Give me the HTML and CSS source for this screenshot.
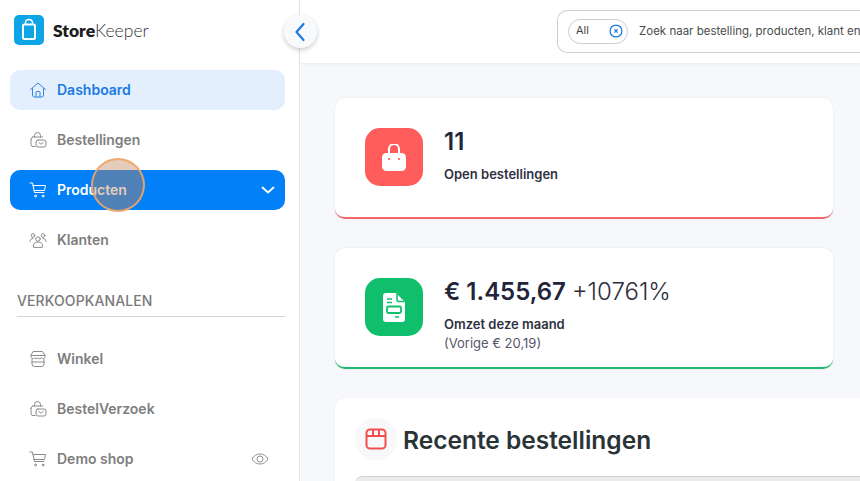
FILE: index.html
```html
<!DOCTYPE html>
<html lang="nl">
<head>
<meta charset="utf-8">
<title>StoreKeeper</title>
<link rel="stylesheet" href="styles.css">
</head>
<body>
<div class="app">
  <aside class="sidebar">
    <div class="brand">
      <svg class="brand-logo" width="30" height="30" viewBox="0 0 30 30"><rect width="30" height="30" rx="5" fill="#0ea5e4"/><rect x="9" y="9.500" width="12" height="14.500" rx="1.500" fill="none" stroke="#fff" stroke-width="2"/><path d="M11.500 9.500V7.500a3.500 3 0 0 1 7 0v2" fill="none" stroke="#fff" stroke-width="1.500"/><rect x="14" y="22" width="2" height="1.200" fill="#0ea5e4"/></svg>
      <span class="brand-name"><b>Store</b>Keeper</span>
    </div>
    <nav class="nav">
      <a class="nav-item is-current">
        <svg class="nav-icon" viewBox="0 0 18 18"><path d="M1.500 8.500 9 2l7.500 6.500M3.500 7.500V14a2 2 0 0 0 2 2h7a2 2 0 0 0 2-2V7.500M7 16v-4.500a1 1 0 0 1 1-1h2a1 1 0 0 1 1 1V16"/></svg>
        <span>Dashboard</span>
      </a>
      <a class="nav-item">
        <svg class="nav-icon" viewBox="0 0 18 18"><path d="M5.500 6V4.500a3 3 0 0 1 6 0V6M3.500 6h10M2 8.500a2.500 2.500 0 0 1 1.500-2.500M2 8.500v5a2 2 0 0 0 2 2h2"/><rect x="7" y="9" width="10" height="7" rx="2"/><path d="M10 11.500c.5 2 3.500 2 4 0"/></svg>
        <span>Bestellingen</span>
      </a>
      <a class="nav-item is-active">
        <svg class="nav-icon" viewBox="0 0 18 18"><path d="M1 2h2.500l2 9.500h9.500M4 4.500h12.500l-1 5H5"/><circle cx="6.500" cy="15" r=".9"/><circle cx="14" cy="15" r=".9"/></svg>
        <span>Producten</span>
        <svg class="nav-chevron" viewBox="0 0 14 8"><path d="M1.500 1.500 7 6.500l5.500-5"/></svg>
      </a>
      <a class="nav-item">
        <svg class="nav-icon" viewBox="0 0 18 18"><circle cx="4" cy="4.500" r="1.800"/><circle cx="14" cy="4.500" r="1.800"/><circle cx="9" cy="8" r="2.200"/><path d="M1 10.500c0-2 1-3 3-3M17 10.500c0-2-1-3-3-3M4.500 16c-1-3 1.500-5 4.500-5s5.500 2 4.500 5z"/></svg>
        <span>Klanten</span>
      </a>
    </nav>
    <h2 class="nav-heading">VERKOOPKANALEN</h2>
    <nav class="nav">
      <a class="nav-item">
        <svg class="nav-icon" viewBox="0 0 18 18"><path d="M4.500 1.500h9L16 5.500v1a2 2 0 0 1-3.500 1.300A2.500 2.500 0 0 1 9 8a2.500 2.500 0 0 1-3.500-.2A2 2 0 0 1 2 6.500v-1zM2 5.500h14M3 9v5a2.500 2.500 0 0 0 2.500 2.500h7A2.500 2.500 0 0 0 15 14V9M3 12h12"/></svg>
        <span>Winkel</span>
      </a>
      <a class="nav-item">
        <svg class="nav-icon" viewBox="0 0 18 18"><path d="M5.500 6V4.500a3 3 0 0 1 6 0V6M3.500 6h10M2 8.500a2.500 2.500 0 0 1 1.500-2.500M2 8.500v5a2 2 0 0 0 2 2h2"/><rect x="7" y="9" width="10" height="7" rx="2"/><path d="M10 11.500c.5 2 3.500 2 4 0"/></svg>
        <span>BestelVerzoek</span>
      </a>
      <a class="nav-item">
        <svg class="nav-icon" viewBox="0 0 18 18"><path d="M1 2h2.500l2 9.500h9.500M4 4.500h12.500l-1 5H5"/><circle cx="6.500" cy="15" r=".9"/><circle cx="14" cy="15" r=".9"/></svg>
        <span>Demo shop</span>
        <svg class="nav-eye" viewBox="0 0 18 14"><path d="M1 7c2-3.500 5-5 8-5s6 1.500 8 5c-2 3.500-5 5-8 5s-6-1.500-8-5z"/><circle cx="9" cy="7" r="3"/></svg>
      </a>
    </nav>
  </aside>
  <button class="collapse" aria-label="Inklappen">
    <svg width="12" height="20" viewBox="0 0 12 20"><path d="M9.500 2 2.500 10l7 8"/></svg>
  </button>
  <main class="main">
    <header class="topbar">
      <div class="search">
        <div class="chip">
          <span>All</span>
          <svg width="14" height="14" viewBox="0 0 14 14"><circle cx="7" cy="7" r="5.900"/><path d="M5.400 5.400l3.200 3.200M8.600 5.400 5.400 8.600"/></svg>
        </div>
        <span class="search-text">Zoek naar bestelling, producten, klant en meer...</span>
      </div>
    </header>
    <div class="content">
      <section class="stat stat-red">
        <div class="stat-icon">
          <svg width="24" height="27" viewBox="0 0 24 27"><path d="M7 12V5a5 5 0 0 1 10 0v7" fill="none" stroke="#fff" stroke-width="2"/><rect x="0" y="9" width="24" height="18" rx="4.500" fill="#fff"/><circle cx="7" cy="15" r="1.100" fill="#ff5c5c"/><circle cx="17" cy="15" r="1.100" fill="#ff5c5c"/></svg>
        </div>
        <div class="stat-body">
          <div class="stat-value">11</div>
          <div class="stat-label">Open bestellingen</div>
        </div>
      </section>
      <section class="stat stat-green">
        <div class="stat-icon">
          <svg width="22" height="29" viewBox="0 0 22 29"><path d="M3 0h10l9 9v17a3 3 0 0 1-3 3H3a3 3 0 0 1-3-3V3a3 3 0 0 1 3-3z" fill="#fff"/><path d="M14 .5V7a1.500 1.500 0 0 0 1.500 1.500H21.500" fill="none" stroke="#10bf6c" stroke-width="1.500"/><path d="M4 6h5M4 9.500h5M12 24h4" stroke="#10bf6c" stroke-width="1.600" fill="none"/><rect x="4" y="13.500" width="14" height="6.500" rx="1.500" fill="none" stroke="#10bf6c" stroke-width="1.800"/></svg>
        </div>
        <div class="stat-body">
          <div class="stat-value">€ 1.455,67 <span class="stat-delta">+10761%</span></div>
          <div class="stat-label">Omzet deze maand</div>
          <div class="stat-prev">(Vorige € 20,19)</div>
        </div>
      </section>
      <section class="panel">
        <div class="panel-head">
          <span class="panel-icon">
            <svg width="22" height="22" viewBox="0 0 22 22"><path d="M5 1.500h12a3.500 3.500 0 0 1 3.500 3.500v12a3.500 3.500 0 0 1-3.500 3.500H5A3.500 3.500 0 0 1 1.500 17V5A3.500 3.500 0 0 1 5 1.500zM1.500 8h19M8 1.500V8M14 1.500V8"/></svg>
          </span>
          <h1 class="panel-title">Recente bestellingen</h1>
        </div>
        <div class="panel-table"></div>
      </section>
    </div>
  </main>
  <div class="click-marker"></div>
</div>
</body>
</html>
```

FILE: styles.css
```css
* { box-sizing: border-box; }
html, body { margin: 0; height: 100%; overflow: hidden; }
body { font-family: "Inter", "Liberation Sans", sans-serif; background: #fff; color: #2b2d3a; }

.app { position: relative; display: flex; width: 860px; height: 481px; overflow: hidden; }

.sidebar { flex: 0 0 300px; height: 481px; background: #fff; border-right: 1px solid #e6e7ea; padding: 15px 14px 0 10px; }

.brand { display: flex; align-items: center; height: 30px; padding-left: 4px; gap: 9px; }
.brand-logo { flex: none; }
.brand-name { font-family: "Lato", sans-serif; font-size: 17.500px; font-weight: 300; color: #333; }
.brand-name b { font-weight: 800; color: #1c1c1c; }

.nav { display: flex; flex-direction: column; gap: 10px; }
.brand + .nav { margin-top: 25px; }
.nav-item { display: flex; align-items: center; height: 40px; padding: 0 10px 2px 19px; border-radius: 10px; color: #7e7e7e; font-size: 14px; font-weight: 600; }
.nav-icon { flex: none; width: 18px; height: 18px; margin: 2px 10px 0 0; fill: none; stroke: #8a8a8a; stroke-width: 1; stroke-linecap: round; stroke-linejoin: round; }
.nav-item.is-current { background: #e3effd; color: #1a7ae2; }
.is-current .nav-icon { stroke: #3584dd; }
.nav-item.is-active { background: #0180f8; color: #fff; }
.is-active .nav-icon { stroke: #fff; }
.nav-chevron { width: 14px; height: 8px; margin: 2px 0 0 auto; fill: none; stroke: #fff; stroke-width: 1.800; stroke-linecap: round; stroke-linejoin: round; }
.nav-eye { width: 18px; height: 14px; margin: 2px 6px 0 auto; fill: none; stroke: #8f8f8f; stroke-width: 1; }

.nav-heading { margin: 32px 0 22px 7px; padding-bottom: 7px; border-bottom: 1px solid #d4d4d6; font-size: 14px; line-height: 17px; font-weight: 500; color: #7a7a7a; letter-spacing: .1px; }

.collapse { position: absolute; left: 284px; top: 15px; display: flex; align-items: center; justify-content: center; width: 33px; height: 33px; padding: 0 2px 0 0; border: none; border-radius: 50%; background: #f9fafc; box-shadow: 0 2px 5px rgba(0, 0, 0, .2); }
.collapse svg { fill: none; stroke: #1a7ae2; stroke-width: 2.200; stroke-linecap: round; stroke-linejoin: round; }

.main { flex: 1; min-width: 0; background: #f6f8fb; }

.topbar { display: flex; align-items: center; height: 63px; padding-left: 257px; background: #fff; box-shadow: 0 1px 3px rgba(0, 0, 0, .06); }
.search { display: flex; flex: none; align-items: center; width: 420px; height: 43px; margin-bottom: 1px; padding-left: 10px; border: 1px solid #cfcfd1; border-right: none; border-radius: 10px 0 0 10px; }
.chip { display: flex; align-items: center; justify-content: space-between; flex: none; width: 60px; height: 25px; padding: 0 4px 0 7px; border: 1px solid #c9ced6; border-radius: 12.500px; font-size: 11px; color: #444; }
.chip span { position: relative; bottom: 1px; }
.chip svg { fill: none; stroke: #1a7ae2; stroke-width: 1.300; }
.search-text { margin-left: 11px; font-size: 11.500px; color: #4c4c4c; white-space: nowrap; }

.content { display: flex; flex-direction: column; gap: 29px; padding: 35px 0 0 35px; }

.stat { display: flex; align-items: flex-start; flex: none; width: 498px; height: 121px; padding: 30px 0 0 30px; background: #fff; border-radius: 10px; box-shadow: 0 0 2px rgba(0, 0, 0, .1); }
.stat-red { border-bottom: 2px solid #f2686a; }
.stat-green { border-bottom: 2px solid #1cb96f; }
.stat-icon { display: flex; flex: none; align-items: center; justify-content: center; width: 58px; height: 58px; border-radius: 15px; }
.stat-red .stat-icon { background: #ff5c5c; }
.stat-green .stat-icon { background: #10bf6c; }
.stat-body { margin: -1px 0 0 21px; }
.stat-value { font-size: 24px; line-height: 29px; font-weight: 600; color: #23253a; }
.stat-red .stat-value { font-kerning: none; }
.stat-delta { font-weight: 300; color: #2b2d3a; }
.stat-label { margin-top: 10px; font-size: 13px; line-height: 16px; font-weight: 600; color: #2f3142; }
.stat-prev { margin-top: 3px; font-size: 13px; line-height: 16px; color: #55576a; }

.panel { flex: none; width: 600px; height: 200px; padding: 20px 0 0 20px; background: #fff; border-radius: 10px 0 0 0; box-shadow: 0 0 2px rgba(0, 0, 0, .06); }
.panel-head { display: flex; align-items: center; height: 42px; }
.panel-icon { display: flex; flex: none; align-items: center; justify-content: center; width: 42px; height: 42px; border-radius: 50%; background: #f8f8fb; }
.panel-icon svg { fill: none; stroke: #f25050; stroke-width: 2; }
.panel-title { margin: 2px 0 0 6px; font-size: 24.500px; line-height: 28px; font-weight: 600; color: #2a3437; }
.panel-table { height: 40px; margin-top: 16px; background: #ececec; border-top: 1px solid #cfcfcf; border-radius: 8px 0 0 0; }

.click-marker { position: absolute; left: 91px; top: 158px; width: 54px; height: 54px; border-radius: 50%; background: rgba(190, 130, 90, .42); border: 2px solid rgba(238, 165, 105, .9); }
```
